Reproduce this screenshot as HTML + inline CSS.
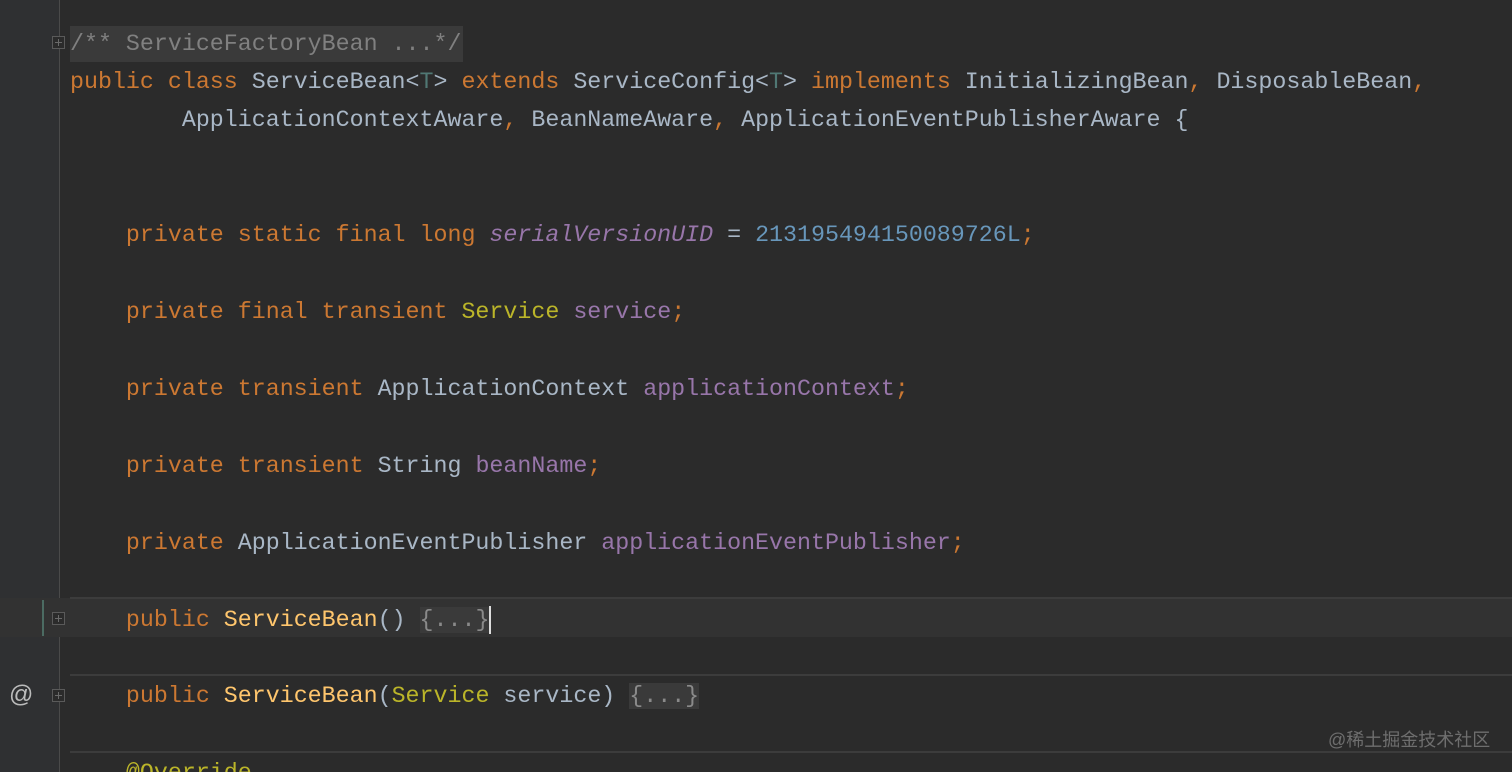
<!DOCTYPE html>
<html><head><meta charset="utf-8"><style>
html,body{margin:0;padding:0;width:1512px;height:772px;overflow:hidden;}
body{background:#2b2b2b;position:relative;font-family:"Liberation Mono",monospace;font-size:23.3px;color:#a9b7c6;}
.gut{position:absolute;left:0;top:0;width:59px;height:772px;background:#2f3032;}
.vl{position:absolute;left:59px;top:0;width:1px;height:772px;background:#4a4a4a;}
.ln{position:absolute;left:70px;height:38px;line-height:40px;white-space:pre;}
.k{color:#cc7832}.f{color:#9876aa}.n{color:#6897bb}.y{color:#bbb529}.m{color:#ffc66d}.c{color:#808080}.t{color:#507874}
.fold{background:#3a3a3a;color:#8a8a8a;}
.sep{position:absolute;left:70px;right:0;height:2px;background:#3c3c3c;}
.box{position:absolute;width:13px;height:13px;border:1px solid #5a5a5a;box-sizing:border-box;background:#2b2b2b;}
.box:before{content:"";position:absolute;left:2px;top:5px;width:7px;height:1px;background:#6a6a6a;}
.box:after{content:"";position:absolute;left:5px;top:2px;width:1px;height:7px;background:#6a6a6a;}
</style></head><body>
<div class="gut"></div>
<div class="vl"></div>
<div style="position:absolute;left:0;top:598px;width:1512px;height:39px;background:#323232;"></div>
<div class="sep" style="top:597px"></div>
<div class="sep" style="top:674px"></div>
<div class="sep" style="top:751px"></div>
<div style="position:absolute;left:42px;top:600px;width:2px;height:36px;background:#4b6b62;"></div>
<div class="box" style="left:52px;top:36px"></div>
<div class="box" style="left:52px;top:612px"></div>
<div class="box" style="left:52px;top:689px"></div>
<div style="position:absolute;left:9px;top:676px;line-height:38px;font-size:24px;color:#bbb;font-family:'Liberation Sans',sans-serif;">@</div>
<div class="ln" style="top:24px"><span class="fold" style="display:inline-block;line-height:36px;padding-right:2px;"><span class="c">/** ServiceFactoryBean ...*/</span></span></div>
<div class="ln" style="top:62px"><span class="k">public class </span>ServiceBean&lt;<span class="t">T</span>&gt; <span class="k">extends </span>ServiceConfig&lt;<span class="t">T</span>&gt; <span class="k">implements </span>InitializingBean<span class="k">, </span>DisposableBean<span class="k">,</span></div>
<div class="ln" style="top:100px">        ApplicationContextAware<span class="k">, </span>BeanNameAware<span class="k">, </span>ApplicationEventPublisherAware {</div>
<div class="ln" style="top:215px">    <span class="k">private static final long </span><i class="f">serialVersionUID</i> = <span class="n">213195494150089726L</span><span class="k">;</span></div>
<div class="ln" style="top:292px">    <span class="k">private final transient </span><span class="y">Service</span> <span class="f">service</span><span class="k">;</span></div>
<div class="ln" style="top:369px">    <span class="k">private transient </span>ApplicationContext <span class="f">applicationContext</span><span class="k">;</span></div>
<div class="ln" style="top:446px">    <span class="k">private transient </span>String <span class="f">beanName</span><span class="k">;</span></div>
<div class="ln" style="top:523px">    <span class="k">private </span>ApplicationEventPublisher <span class="f">applicationEventPublisher</span><span class="k">;</span></div>
<div class="ln" style="top:600px">    <span class="k">public </span><span class="m">ServiceBean</span>() <span class="fold">{...}</span><span style="display:inline-block;width:2px;height:28px;background:#ddd;vertical-align:middle;"></span></div>
<div class="ln" style="top:676px">    <span class="k">public </span><span class="m">ServiceBean</span>(<span class="y">Service</span> service) <span class="fold">{...}</span></div>
<div class="ln" style="top:753px">    <span class="y">@Override</span></div>
<div style="position:absolute;left:1328px;top:726px;font-family:'Liberation Sans','Noto Sans CJK SC',sans-serif;font-size:18px;color:#6e6e6e;">@稀土掘金技术社区</div>
</body></html>
